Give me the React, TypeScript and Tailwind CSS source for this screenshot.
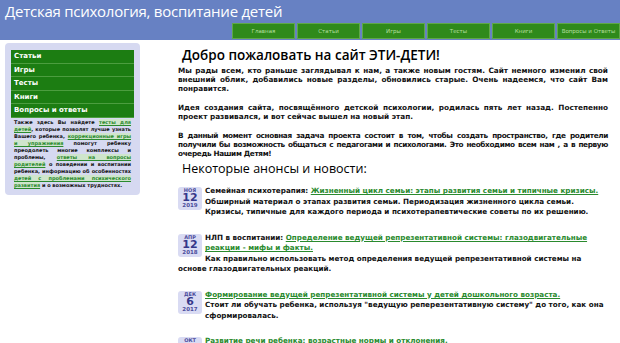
import React from "react";

const topNav = ["Главная", "Статьи", "Игры", "Тесты", "Книги", "Вопросы и Ответы"];
const sideNav = ["Статьи", "Игры", "Тесты", "Книги", "Вопросы и ответы"];

type News = {
  mon: string;
  day: string;
  year: string;
  prefix?: string;
  link: string;
  text: string;
};

const news: News[] = [
  {
    mon: "НОЯ",
    day: "12",
    year: "2019",
    prefix: "Семейная психотерапия: ",
    link: "Жизненный цикл семьи: этапы развития семьи и типичные кризисы.",
    text: "Обширный материал о этапах развития семьи. Периодизация жизненного цикла семьи. Кризисы, типичные для каждого периода и психотерапевтические советы по их решению.",
  },
  {
    mon: "АПР",
    day: "12",
    year: "2018",
    prefix: "НЛП в воспитании: ",
    link: "Определение ведущей репрезентативной системы: глазодвигательные реакции - мифы и факты.",
    text: "Как правильно использовать метод определения ведущей репрезентативной системы на основе глазодвигательных реакций.",
  },
  {
    mon: "ДЕК",
    day: "6",
    year: "2017",
    link: "Формирование ведущей репрезентативной системы у детей дошкольного возраста.",
    text: "Стоит ли обучать ребенка, используя \"ведущую реперезентативную систему\" до того, как она сформировалась.",
  },
  {
    mon: "ОКТ",
    day: "3",
    year: "2017",
    link: "Развитие речи ребенка: возрастные нормы и отклонения.",
    text: "Что должен уметь ребенок в каждом возрасте.",
  },
];

function DateBadge({ mon, day, year }: { mon: string; day: string; year: string }) {
  return (
    <div className="float-left mr-[3px] mt-[1px] flex h-[23px] w-[24px] flex-col items-center justify-center rounded-[3px] bg-[#d9dbf3] leading-none text-[#4b4c9c]">
      <span className="text-[5px]">{mon}</span>
      <span className="text-[11px] font-bold leading-[10px] text-[#35378a]">{day}</span>
      <span className="text-[5.5px]">{year}</span>
    </div>
  );
}

const sideLink = "bg-[#cfe5cc] text-[#2a8a2e] underline";

export default function App() {
  return (
    <div className="h-[343px] w-[620px] overflow-hidden bg-white font-['DejaVu_Sans',sans-serif]">
      {/* header */}
      <div className="flex h-[40px] flex-col bg-[#6781c3]">
        <div className="pl-[5px] font-['Open_Sans',sans-serif] text-[15px] leading-[22px] tracking-[-0.25px] text-white">
          Детская психология, воспитание детей
        </div>
        <div className="ml-auto mt-[1px] flex gap-[2px]">
          {topNav.map((n) => (
            <div
              key={n}
              className="flex h-[16px] w-[63px] items-center justify-center border border-[#5fa848] bg-[#2f8a1b] text-[5.5px] text-[#b6df9f]"
            >
              {n}
            </div>
          ))}
        </div>
      </div>

      <div className="flex">
        {/* sidebar */}
        <div className="ml-[5px] mt-[3px] h-[152px] w-[135px] shrink-0 rounded-[4px] bg-[#d6d9f1] px-[6px] pt-[7px]">
          <div className="flex flex-col">
            {sideNav.map((n) => (
              <div
                key={n}
                className="flex h-[13.6px] items-center border-b border-[#4c9d3f] bg-[#1c7d12] pl-[3px] text-[7px] font-bold text-white"
              >
                {n}
              </div>
            ))}
          </div>
          <p className="px-[3px] pt-[1px] text-justify text-[5px] font-bold leading-[7px] text-[#111]">
            Также здесь Вы найдете <a className={sideLink}>тесты для детей</a>, которые позволят лучше узнать Вашего
            ребенка, <a className={sideLink}>коррекционные игры и упражнения</a> помогут ребенку преодолеть многие
            комплексы и проблемы, <a className={sideLink}>ответы на вопросы родителей</a> о поведении и воспитании
            ребенка, информацию об особенностях <a className={sideLink}>детей с проблемами психического развития</a> и о
            возможных трудностях.
          </p>
        </div>

        {/* main */}
        <div className="ml-[38px] mr-[12px] flex-1">
          <h1 className="pl-[4px] pt-[6px] font-['Open_Sans',sans-serif] text-[13.5px] font-semibold leading-[18px] text-black">
            Добро пожаловать на сайт ЭТИ-ДЕТИ!
          </h1>
          <div className="text-justify text-[7.3px] font-bold leading-[9px] text-[#111]">
            <p className="mt-[2px]">
              Мы рады всем, кто раньше заглядывал к нам, а также новым гостям. Сайт немного изменил свой внешний облик,
              добавились новые разделы, обновились старые. Очень надеемся, что сайт Вам понравится.
            </p>
            <p className="mt-[10px]">
              Идея создания сайта, посвящённого детской психологии, родилась пять лет назад. Постепенно проект
              развивался, и вот сейчас вышел на новый этап.
            </p>
            <p className="mt-[10px] tracking-[-0.35px]">
              В данный момент основная задача проекта состоит в том, чтобы создать пространство, где родители получили
              бы возможность общаться с педагогами и психологами. Это необходимо всем нам , а в первую очередь Нашим
              Детям!
            </p>
          </div>
          <h2 className="mt-[2px] pl-[4px] font-['Open_Sans',sans-serif] text-[12.5px] font-medium leading-[18px] text-black">
            Некоторые анонсы и новости:
          </h2>
          <div className="mt-[8px] flex flex-col gap-[15px] text-[7.2px] font-bold leading-[10.5px] text-[#111]">
            {news.map((n) => (
              <div key={n.link} className="flow-root">
                <DateBadge mon={n.mon} day={n.day} year={n.year} />
                {n.prefix}
                <a className="text-[#2a8a2e] underline">{n.link}</a>
                <br />
                {n.text}
              </div>
            ))}
          </div>
        </div>
      </div>
    </div>
  );
}
